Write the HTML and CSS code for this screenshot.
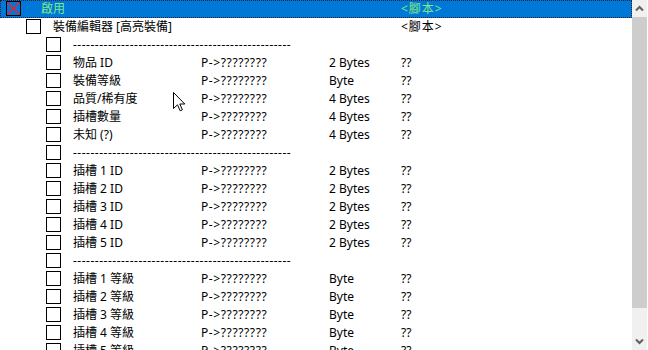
FILE: index.html
```html
<!DOCTYPE html>
<html lang="zh-Hant">
<head>
<meta charset="utf-8">
<title>Address list</title>
<link rel="stylesheet" href="styles.css">
</head>
<body>
<div class="window">
  <div class="list">
    <div class="row selected">
      <div class="desc lvl0">
        <span class="cb checked"><svg width="13" height="13" viewBox="0 0 13 13"><path d="M0.5 0.5L12.5 12.5M12.5 0.5L0.5 12.5" stroke="#ff1a1a" stroke-width="1.3" fill="none"/></svg></span>
        <span class="txt first">啟用</span>
      </div>
      <div class="addr"></div><div class="type"></div><div class="val script">&lt;腳本&gt;</div>
    </div>
    <div class="row">
      <div class="desc lvl1"><span class="cb"></span><span class="txt">裝備編輯器 [高亮裝備]</span></div>
      <div class="addr"></div><div class="type"></div><div class="val script">&lt;腳本&gt;</div>
    </div>
    <div class="row">
      <div class="desc lvl2"><span class="cb"></span><span class="txt dash">--------------------------------------------------</span></div>
    </div>
    <div class="row"><div class="desc lvl2"><span class="cb"></span><span class="txt">物品 ID</span></div><div class="addr">P-&gt;????????</div><div class="type">2 Bytes</div><div class="val">??</div></div>
    <div class="row"><div class="desc lvl2"><span class="cb"></span><span class="txt">裝備等級</span></div><div class="addr">P-&gt;????????</div><div class="type">Byte</div><div class="val">??</div></div>
    <div class="row"><div class="desc lvl2"><span class="cb"></span><span class="txt">品質/稀有度</span></div><div class="addr">P-&gt;????????</div><div class="type">4 Bytes</div><div class="val">??</div></div>
    <div class="row"><div class="desc lvl2"><span class="cb"></span><span class="txt">插槽數量</span></div><div class="addr">P-&gt;????????</div><div class="type">4 Bytes</div><div class="val">??</div></div>
    <div class="row"><div class="desc lvl2"><span class="cb"></span><span class="txt">未知 (?)</span></div><div class="addr">P-&gt;????????</div><div class="type">4 Bytes</div><div class="val">??</div></div>
    <div class="row">
      <div class="desc lvl2"><span class="cb"></span><span class="txt dash">--------------------------------------------------</span></div>
    </div>
    <div class="row"><div class="desc lvl2"><span class="cb"></span><span class="txt">插槽 1 ID</span></div><div class="addr">P-&gt;????????</div><div class="type">2 Bytes</div><div class="val">??</div></div>
    <div class="row"><div class="desc lvl2"><span class="cb"></span><span class="txt">插槽 2 ID</span></div><div class="addr">P-&gt;????????</div><div class="type">2 Bytes</div><div class="val">??</div></div>
    <div class="row"><div class="desc lvl2"><span class="cb"></span><span class="txt">插槽 3 ID</span></div><div class="addr">P-&gt;????????</div><div class="type">2 Bytes</div><div class="val">??</div></div>
    <div class="row"><div class="desc lvl2"><span class="cb"></span><span class="txt">插槽 4 ID</span></div><div class="addr">P-&gt;????????</div><div class="type">2 Bytes</div><div class="val">??</div></div>
    <div class="row"><div class="desc lvl2"><span class="cb"></span><span class="txt">插槽 5 ID</span></div><div class="addr">P-&gt;????????</div><div class="type">2 Bytes</div><div class="val">??</div></div>
    <div class="row">
      <div class="desc lvl2"><span class="cb"></span><span class="txt dash">--------------------------------------------------</span></div>
    </div>
    <div class="row"><div class="desc lvl2"><span class="cb"></span><span class="txt">插槽 1 等級</span></div><div class="addr">P-&gt;????????</div><div class="type">Byte</div><div class="val">??</div></div>
    <div class="row"><div class="desc lvl2"><span class="cb"></span><span class="txt">插槽 2 等級</span></div><div class="addr">P-&gt;????????</div><div class="type">Byte</div><div class="val">??</div></div>
    <div class="row"><div class="desc lvl2"><span class="cb"></span><span class="txt">插槽 3 等級</span></div><div class="addr">P-&gt;????????</div><div class="type">Byte</div><div class="val">??</div></div>
    <div class="row"><div class="desc lvl2"><span class="cb"></span><span class="txt">插槽 4 等級</span></div><div class="addr">P-&gt;????????</div><div class="type">Byte</div><div class="val">??</div></div>
    <div class="row"><div class="desc lvl2"><span class="cb"></span><span class="txt">插槽 5 等級</span></div><div class="addr">P-&gt;????????</div><div class="type">Byte</div><div class="val">??</div></div>

    <svg class="cursor" width="13" height="20" viewBox="0 0 13 20"><path d="M0.5 0.5V16.5L4.5 12.8L7.2 18.8L9.4 17.8L6.8 12H11.8Z" fill="#fff" stroke="#000" stroke-width="1" stroke-linejoin="miter"/></svg>
  </div>
  <div class="scrollbar">
    <div class="sb-btn"><svg width="15" height="17" viewBox="0 0 15 17"><polyline points="4,10.5 7.5,7 11,10.5" fill="none" stroke="#606060" stroke-width="2"/></svg></div>
    <div class="thumb"></div>
    <div class="track"></div>
    <div class="sb-btn"><svg width="15" height="17" viewBox="0 0 15 17"><polyline points="4,6.5 7.5,10 11,6.5" fill="none" stroke="#606060" stroke-width="2"/></svg></div>
  </div>
</div>
</body>
</html>
```

FILE: styles.css
```css
html, body {
  margin: 0;
  padding: 0;
  background: #fff;
}
.window {
  display: flex;
  width: 648px;
  height: 350px;
  overflow: hidden;
  font-family: "Noto Sans", "Noto Sans CJK TC", sans-serif;
  font-size: 12px;
  color: #000;
}
.list {
  position: relative;
  width: 632px;
  height: 350px;
  overflow: hidden;
  flex: none;
}
.row {
  display: flex;
  height: 18px;
  line-height: 18px;
  white-space: nowrap;
  box-sizing: border-box;
}
.row.selected {
  background: #0078d7;
  color: #7fe87f;
  outline: 1px dotted #20203a;
  outline-offset: -1px;
}
.desc {
  width: 201px;
  flex: none;
  display: flex;
  align-items: flex-start;
  box-sizing: border-box;
}
.lvl0 { padding-left: 6px; }
.lvl1 { padding-left: 26px; }
.lvl2 { padding-left: 46px; }
.cb {
  flex: none;
  width: 15px;
  height: 15px;
  margin-top: 1px;
  margin-right: 12px;
  box-sizing: border-box;
  border: 1px solid #000;
  background: #fff;
  display: block;
}
.cb svg { display: block; }
.cb.checked { background: transparent; }
.txt.first { margin-left: 8px; }
.txt.dash { letter-spacing: 0.5px; }
.addr { width: 128px; flex: none; letter-spacing: 0.6px; }
.type { width: 72px; flex: none; }
.val { flex: 1; }
.val.script { letter-spacing: 1px; }
.cursor {
  position: absolute;
  left: 173px;
  top: 92px;
}
.scrollbar {
  width: 15px;
  height: 350px;
  flex: none;
  background: #f0f0f0;
  display: flex;
  flex-direction: column;
}
.sb-btn { height: 17px; flex: none; }
.sb-btn svg { display: block; }
.thumb { height: 291px; background: #cdcdcd; flex: none; }
.track { flex: 1; }
```
